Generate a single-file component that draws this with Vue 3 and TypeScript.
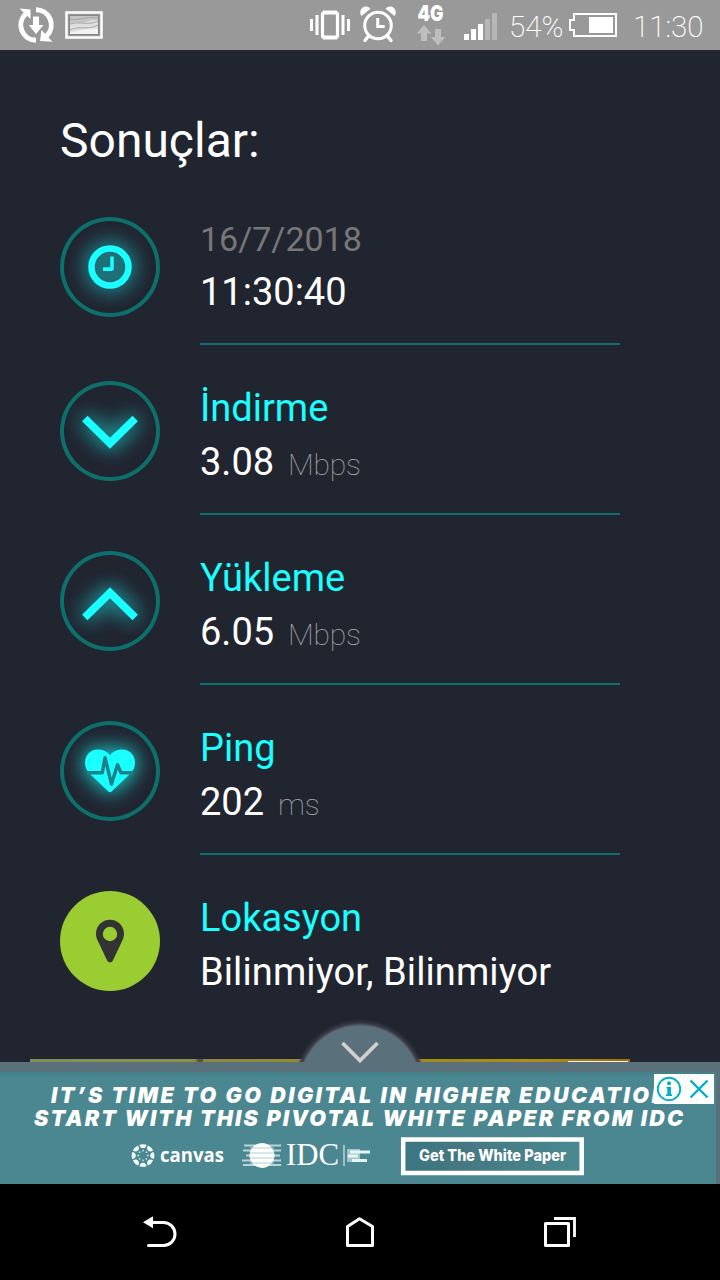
<script setup lang="ts">
interface Result {
  kind: 'clock' | 'down' | 'up' | 'pulse' | 'place'
  label: string
  value: string
  unit?: string
}

const results: Result[] = [
  { kind: 'clock', label: '16/7/2018', value: '11:30:40' },
  { kind: 'down', label: 'İndirme', value: '3.08', unit: 'Mbps' },
  { kind: 'up', label: 'Yükleme', value: '6.05', unit: 'Mbps' },
  { kind: 'pulse', label: 'Ping', value: '202', unit: 'ms' },
  { kind: 'place', label: 'Lokasyon', value: 'Bilinmiyor, Bilinmiyor' },
]

const rays = Array.from({ length: 8 }, (_, i) => i * 45)
</script>

<template>
  <div class="screen">
    <header class="status">
      <svg class="status-left" width="120" height="50" viewBox="0 0 120 50">
        <g fill="none" stroke="#fff" stroke-width="5">
          <path d="M36 9.7A15.2 15.2 0 0 1 46.5 36" />
          <path d="M36 40.2A15.2 15.2 0 0 1 25.500 14" />
        </g>
        <path d="M19.500 8.500 30.500 9.500 30.500 19Z M52.500 41.800 40 41 41.500 30Z" fill="#fff" />
        <path d="M33 16.500h6v8.500h4.500L36 34l-7.200-9H33z" fill="#fff" />
        <rect x="66.500" y="12.500" width="35" height="25" fill="#999" stroke="#fff" stroke-width="2.500" />
        <rect x="69.500" y="15.500" width="29" height="19" fill="#dedede" stroke="#858585" />
        <path d="M70 16h28v4.500c-8-2-13 4-20 2-3-1-5 1-8 0z" fill="#c4c4c4" />
        <path d="M70 19c9 2 18-3 28-1M70 24c10-3 18 2 28-3M70 30c9-5 18 1 28-5" fill="none" stroke="#a8a8a8" />
        <path d="M70 32c8 0 18-5 28-3v5H70z" fill="#f2f2f2" />
      </svg>
      <svg class="status-right" width="194" height="50" viewBox="306 0 194 50">
        <g fill="#fff">
          <rect x="310" y="19" width="3" height="12" /><rect x="315.500" y="15" width="3" height="20" />
          <rect x="341.500" y="15" width="3" height="20" /><rect x="347" y="19" width="3" height="12" />
        </g>
        <rect x="322.500" y="12.500" width="15" height="25" rx="2" fill="none" stroke="#fff" stroke-width="3.200" />
        <path d="M323 12.500h14M323 37.500h14" stroke="#fff" stroke-width="4" />
        <g fill="none" stroke="#fff" stroke-linecap="round">
          <circle cx="378" cy="25.500" r="13.300" stroke-width="3" />
          <path d="M377.700 18v8.500h7" stroke-width="3" stroke-linecap="butt" />
          <path d="M368.500 36l-3.500 4.500M387.500 36l3.500 4.500" stroke-width="3.400" />
        </g>
        <path d="M361.500 16a5.500 5.500 0 0 1 9-7.300zM394.500 16a5.500 5.500 0 0 0-9-7.300z" fill="#fff" />
        <text class="net" x="417.500" y="21" textLength="26" lengthAdjust="spacingAndGlyphs">4G</text>
        <path d="M424 25l7.200 8.500H427V41h-6v-7.500h-4.200zM438 45.300l-7.300-8.300h4.300v-8h6v8h4.300z" fill="#bebebe" />
        <path d="M464 34h5v6h-5zM471 29h5v11h-5zM478 24h5v16h-5z" fill="#fff" />
        <path d="M485 19h5v21h-5zM492 13h5v27h-5z" fill="#b7b7b7" />
      </svg>
      <span class="status-text percent">54%</span>
      <svg class="battery" width="50" height="50" viewBox="568 0 50 50">
        <path d="M574 14h42v22h-42v-6h-4V20h4z" fill="none" stroke="#fff" stroke-width="2" />
        <rect x="589" y="17" width="24" height="16" fill="#fff" />
      </svg>
      <span class="status-text time">11:30</span>
    </header>

    <main class="content">
      <h1>Sonuçlar:</h1>
      <ul class="results">
        <li v-for="r in results" :key="r.kind" class="row" :class="r.kind">
          <div class="badge">
            <svg width="100" height="100" viewBox="0 0 100 100">
              <g v-if="r.kind === 'clock'" class="glow" fill="none" stroke="#1affff">
                <circle cx="50" cy="50" r="18.500" stroke-width="6.500" />
                <path d="M52 39.500v12.600H43" stroke-width="3.600" stroke-linejoin="round" />
              </g>
              <path v-else-if="r.kind === 'down'" class="glow" d="M24.800 37.500 50 62.200 75.200 37.500" fill="none" stroke="#1affff" stroke-width="7.800" />
              <path v-else-if="r.kind === 'up'" class="glow" d="M24.800 66.500 50 41.800 75.200 66.500" fill="none" stroke="#1affff" stroke-width="7.800" />
              <g v-else-if="r.kind === 'pulse'">
                <path class="glow" d="M50 34.200C46 29.500 41.500 28.500 38 28.500 30 28.500 25 34.500 25 41.500c0 4.500 1.500 8 5 11.500l18.400 17.600q1.600 1.300 3.200 0L70 53c3.500-3.500 5-7 5-11.500C75 34.500 70 28.500 62 28.500c-3.500 0-8 1-12 5.700z" fill="#1affff" />
                <path d="M27 51.700h15.300l2.700-15 6.500 26.500 6-19.500 3.500 8H73" fill="none" stroke="#1d818b" stroke-width="3.400" stroke-linejoin="round" />
              </g>
              <path v-else fill="#333" fill-rule="evenodd" d="M50 28.700c-8 0-14 6.300-14 14 0 3 .8 5.200 2 7.600l9 19c1.200 2.800 4.800 2.800 6 0l9-19c1.200-2.400 2-4.600 2-7.600 0-7.700-6-14-14-14zm0 7.100a7.200 7.200 0 1 1 0 14.400 7.200 7.200 0 0 1 0-14.400z" />
            </svg>
          </div>
          <div class="info">
            <div class="label">{{ r.label }}</div>
            <div class="value">{{ r.value }}<span v-if="r.unit" class="unit">{{ r.unit }}</span></div>
          </div>
        </li>
      </ul>
      <div class="photo"></div>
      <div class="handle"></div>
    </main>

    <section class="ad">
      <div class="ad-edge"></div>
      <svg class="ad-body" width="716" height="112" viewBox="0 1072 716 112">
        <g class="headline">
          <text x="51" y="1103.300" textLength="617">IT’S TIME TO GO DIGITAL IN HIGHER EDUCATION</text>
          <text x="34" y="1126" textLength="649">START WITH THIS PIVOTAL WHITE PAPER FROM IDC</text>
        </g>
        <g transform="translate(143 1155.500)">
          <g v-for="a in rays" :key="a" :transform="`rotate(${a})`">
            <path d="M-3.600-10.700Q0-12 3.600-10.700Q2.800-7.200 0-7.200T-3.600-10.700z" fill="#f4ffff" />
            <circle cx="0" cy="-4.800" r=".9" fill="#c9e1e4" />
          </g>
        </g>
        <text class="canvas" x="160" y="1162" textLength="64" lengthAdjust="spacingAndGlyphs">canvas</text>
        <g stroke="#b9d5d9" stroke-width="2.200">
          <path d="M244 1145.500h37M243 1150.500h38M246 1155.500h34M242 1160.500h39M243 1165h38" />
        </g>
        <circle cx="262" cy="1155.500" r="12.500" fill="#fff" />
        <path d="M250 1148h24M250 1153h24M250 1158h24M250 1163h24" stroke="#b1d0d5" stroke-width="1" />
        <text class="idc" x="286" y="1165" textLength="53" lengthAdjust="spacingAndGlyphs">IDC</text>
        <path d="M344 1145v21" stroke="#b9d5d9" stroke-width="1.500" />
        <path d="M347 1149h13v13h-13z" fill="#9fc5ca" />
        <path d="M350 1152h20M348 1156h10M352 1160.500h15" stroke="#e6f5f5" stroke-width="3" />
        <defs>
          <linearGradient id="cta" x1="0" x2="1" y1="0" y2="0">
            <stop offset="0" stop-color="#3a7782" /><stop offset=".3" stop-color="#457781" />
            <stop offset="1" stop-color="#4a8991" />
          </linearGradient>
        </defs>
        <rect x="403.200" y="1139.500" width="178.500" height="33.500" fill="url(#cta)" stroke="#fff" stroke-width="4.500" />
        <text class="cta" x="419" y="1161.300" textLength="147" lengthAdjust="spacingAndGlyphs">Get The White Paper</text>
      </svg>
      <svg class="choices" width="60" height="30" viewBox="0 0 60 30">
        <rect width="60" height="30" fill="#fff" />
        <circle cx="15" cy="15" r="11.200" fill="none" stroke="#00aecd" stroke-width="1.900" />
        <circle cx="15" cy="9.300" r="2" fill="#00aecd" />
        <path d="M12.500 13h4.500v7.300h1v1.600h-6v-1.600h1.300v-5.700h-.8z" fill="#00aecd" />
        <path d="M36.500 6.500 53.500 23.500M53.500 6.500 36.500 23.500" stroke="#00aecd" stroke-width="2.400" />
      </svg>
      <div class="tab">
        <svg width="124" height="38" viewBox="298 1025 124 38">
          <path d="M342.500 1043 360 1060.500 377.500 1043" fill="none" stroke="#d0d0d0" stroke-width="3.800" />
        </svg>
      </div>
    </section>

    <nav class="nav">
      <svg width="40" height="40" viewBox="140 1212 40 40">
        <path d="M150 1222.500h13.500a11.500 11.500 0 0 1 0 23H148.500" fill="none" stroke="#fff" stroke-width="3" stroke-linecap="round" />
        <path d="M143 1222.300l10-6v12z" fill="#fff" />
      </svg>
      <svg width="40" height="40" viewBox="340 1212 40 40">
        <path d="M347.500 1226.500 359.500 1218.700 372.500 1226.500V1245.500H347.500Z" fill="none" stroke="#fff" stroke-width="3" stroke-linejoin="round" />
      </svg>
      <svg width="40" height="40" viewBox="540 1212 40 40">
        <path d="M545.500 1223.500h23v22h-23z" fill="none" stroke="#fff" stroke-width="3" stroke-linejoin="round" />
        <path d="M554 1218.500h20.500v18.500" fill="none" stroke="#fff" stroke-width="2.800" />
      </svg>
    </nav>
  </div>
</template>

<style>
body {
  margin: 0;
  background: #212530;
}
</style>

<style scoped>
.screen {
  width: 720px;
  height: 1280px;
  display: flex;
  flex-direction: column;
  overflow: hidden;
  background: #212530;
  color: #fff;
  font-family: Roboto, "Liberation Sans", sans-serif;
}
.screen svg {
  display: block;
  flex: none;
}
.status {
  flex: none;
  height: 50px;
  display: flex;
  align-items: center;
  background: #999;
}
.status-right {
  margin-left: auto;
}
.status-text {
  flex: none;
  font-size: 29.500px;
  font-weight: 200;
  line-height: 50px;
  white-space: nowrap;
  padding-top: 3px;
}
.percent {
  width: 59px;
  margin-left: 9px;
}
.time {
  width: 87px;
  margin-left: 15px;
}
.net {
  font: 900 22px Inter, "DejaVu Sans", sans-serif;
  fill: #fff;
}
.content {
  flex: none;
  height: 1012px;
  box-sizing: border-box;
  position: relative;
  overflow: hidden;
  padding: 61px 60px 0;
}
h1 {
  margin: 0;
  height: 106px;
  font-size: 48px;
  line-height: 60px;
  font-weight: 400;
}
.results {
  list-style: none;
  margin: 0;
  padding: 0;
  display: flex;
  flex-direction: column;
  gap: 36px;
}
.row {
  display: flex;
  gap: 40px;
}
.badge {
  flex: none;
  box-sizing: border-box;
  width: 100px;
  height: 100px;
  border-radius: 50%;
  box-shadow: inset 0 0 0 4px #0d706d;
}
.place .badge {
  background: #9acd32;
  box-shadow: none;
}
.glow {
  filter: drop-shadow(0 0 10px rgba(26, 255, 255, 0.7)) drop-shadow(0 0 10px rgba(26, 255, 255, 0.3));
}
.info {
  box-sizing: border-box;
  width: 420px;
  height: 134px;
  border-bottom: 2px solid #0d706d;
}
.place .info {
  border: 0;
}
.label {
  color: #1affff;
  font-size: 38px;
  line-height: 54px;
}
.value {
  font-size: 38px;
  line-height: 54px;
  white-space: nowrap;
}
.place .value {
  letter-spacing: 0.1px;
}
.clock .info {
  height: 128px;
}
.clock .label {
  color: #777;
  font-size: 34px;
  line-height: 45px;
}
.clock .value {
  line-height: 60px;
}
.unit {
  margin-left: 14px;
  font-size: 30px;
  font-weight: 100;
  letter-spacing: -0.250px;
  color: #aaa;
}
.photo {
  position: absolute;
  left: 30px;
  top: 1009px;
  width: 600px;
  height: 3px;
  background: linear-gradient(90deg, #7f925a, #8b914a 27.5%, #59592e 28%, #59592e 28.700%, #8b8946 29%, #a18a19 65%, #b18d12 85%, #987305);
}
.handle {
  position: absolute;
  left: 568px;
  top: 1011px;
  width: 60px;
  height: 1px;
  background: #eee;
}
.ad {
  flex: none;
  position: relative;
  height: 122px;
  background: #5a707b;
}
.ad-edge {
  height: 10px;
}
.ad-body {
  background: linear-gradient(#448087, #4a8791 6px);
}
.headline {
  font: italic 900 21.500px Inter, "Open Sans", sans-serif;
  fill: #fff;
}
.canvas {
  font: 700 20px "Open Sans", sans-serif;
  fill: #fff;
}
.idc {
  font: 400 31px "Liberation Serif", serif;
  fill: #fff;
}
.cta {
  font: 800 15.500px Inter, sans-serif;
  fill: #fff;
}
.choices {
  position: absolute;
  left: 654px;
  top: 12px;
}
.tab {
  position: absolute;
  left: 298px;
  top: -37px;
  width: 124px;
  height: 37px;
}
.tab::before {
  content: "";
  position: absolute;
  inset: -12px;
  bottom: 0;
  background: radial-gradient(circle at 50% 73px, #5a707b 60px, #555b66 60.800px, #343944 63px, #21253000 67px);
}
.tab svg {
  position: relative;
}
.nav {
  flex: none;
  height: 96px;
  box-sizing: border-box;
  padding: 28px 140px 0;
  display: flex;
  justify-content: space-between;
  background: #000;
}
</style>
